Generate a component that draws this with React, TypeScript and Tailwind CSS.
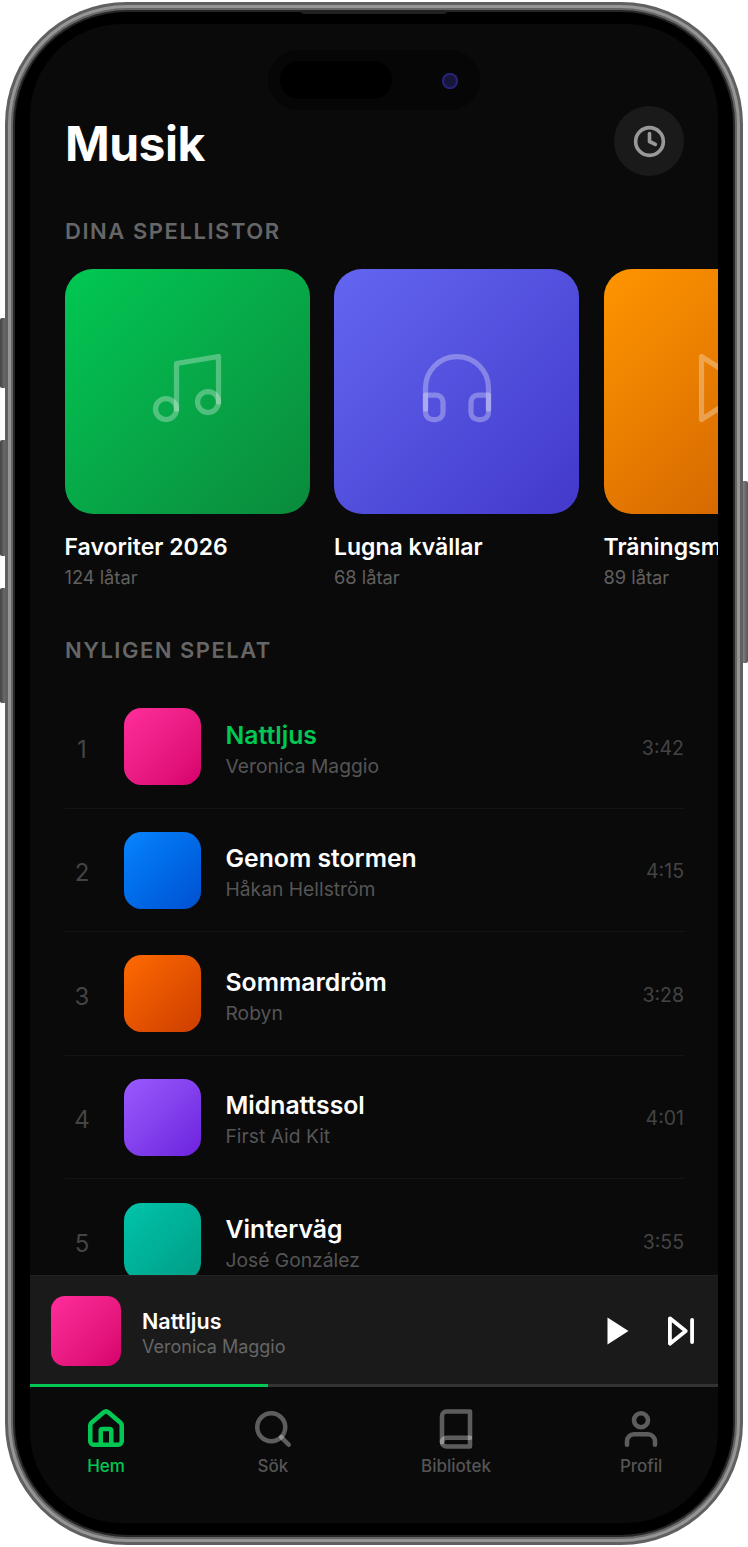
const font = { fontFamily: "Inter, 'Liberation Sans', sans-serif" };

const cards = [
  { name: "Favoriter 2026", sub: "124 låtar", bg: "bg-gradient-to-br from-[#00c853] to-[#0a8a3c]", icon: "music" },
  { name: "Lugna kvällar", sub: "68 låtar", bg: "bg-gradient-to-br from-[#6366f1] to-[#4338ca]", icon: "head" },
  { name: "Träningsmix", sub: "89 låtar", bg: "bg-gradient-to-br from-[#ff9500] to-[#c85a00]", icon: "play" },
];

const tracks = [
  { n: 1, t: "Nattljus", a: "Veronica Maggio", d: "3:42", bg: "bg-gradient-to-br from-[#ff2d9b] to-[#d6006c]", active: true },
  { n: 2, t: "Genom stormen", a: "Håkan Hellström", d: "4:15", bg: "bg-gradient-to-br from-[#0a84ff] to-[#0050d0]" },
  { n: 3, t: "Sommardröm", a: "Robyn", d: "3:28", bg: "bg-gradient-to-br from-[#ff6a00] to-[#cc3d00]" },
  { n: 4, t: "Midnattssol", a: "First Aid Kit", d: "4:01", bg: "bg-gradient-to-br from-[#9b59ff] to-[#6d20dc]" },
  { n: 5, t: "Vinterväg", a: "José González", d: "3:55", bg: "bg-gradient-to-br from-[#00c4aa] to-[#009c86]" },
];

function CardIcon({ kind }: { kind: string }) {
  const s = "rgba(255,255,255,0.3)";
  return (
    <svg width="84" height="84" viewBox="0 0 24 24" fill="none" stroke={s} strokeWidth="1.5" strokeLinecap="round" strokeLinejoin="round" className="mb-[7px] shrink-0">
      {kind === "music" && (
        <>
          <path d="M9 18V5l12-2v13" />
          <circle cx="6" cy="18" r="3" />
          <circle cx="18" cy="16" r="3" />
        </>
      )}
      {kind === "head" && (
        <>
          <path d="M3 18v-6a9 9 0 0 1 18 0v6" />
          <path d="M21 19a2 2 0 0 1-2 2h-1a2 2 0 0 1-2-2v-3a2 2 0 0 1 2-2h3z" />
          <path d="M3 19a2 2 0 0 0 2 2h1a2 2 0 0 0 2-2v-3a2 2 0 0 0-2-2H3z" />
        </>
      )}
      {kind === "play" && <polygon points="5 3 19 12 5 21 5 3" />}
    </svg>
  );
}

function TabIcon({ kind, color }: { kind: string; color: string }) {
  return (
    <svg width="42" height="42" viewBox="0 0 24 24" fill="none" stroke={color} strokeWidth="2.6" strokeLinecap="round" strokeLinejoin="round">
      {kind === "home" && (
        <>
          <path d="M3 10a2 2 0 0 1 .709-1.528l7-6a2 2 0 0 1 2.582 0l7 6A2 2 0 0 1 21 10v9a2 2 0 0 1-2 2H5a2 2 0 0 1-2-2z" />
          <path d="M15 21v-8a1 1 0 0 0-1-1h-4a1 1 0 0 0-1 1v8" />
        </>
      )}
      {kind === "search" && (
        <>
          <circle cx="11" cy="11" r="8" />
          <path d="m21 21-4.3-4.3" />
        </>
      )}
      {kind === "book" && (
        <>
          <path d="M4 19.5A2.5 2.5 0 0 1 6.5 17H20" />
          <path d="M6.5 2H20v20H6.5A2.5 2.5 0 0 1 4 19.5v-15A2.5 2.5 0 0 1 6.5 2z" />
        </>
      )}
      {kind === "user" && (
        <>
          <path d="M20 21v-2a4 4 0 0 0-4-4H8a4 4 0 0 0-4 4v2" />
          <circle cx="12" cy="7" r="4" />
        </>
      )}
    </svg>
  );
}

function Tab({ kind, label, active, className }: { kind: string; label: string; active?: boolean; className?: string }) {
  const c = active ? "#00c853" : "rgba(255,255,255,0.34)";
  return (
    <div className={`flex flex-col items-center ${className ?? ""}`}>
      <TabIcon kind={kind} color={c} />
      <span className={`mt-[6px] text-[17px] leading-[21px] font-medium ${active ? "text-[#00c853]" : "text-[#555]"}`}>{label}</span>
    </div>
  );
}

export default function App() {
  return (
    <div className="relative h-[1547px] w-[748px] overflow-hidden bg-white" style={font}>
      {/* side buttons */}
      <div className="absolute left-0 top-[318px] h-[70px] w-[6px] rounded-l-[2px] bg-gradient-to-r from-[#444] to-[#777]" />
      <div className="absolute left-0 top-[440px] h-[116px] w-[6px] rounded-l-[2px] bg-gradient-to-r from-[#444] to-[#777]" />
      <div className="absolute left-0 top-[588px] h-[115px] w-[6px] rounded-l-[2px] bg-gradient-to-r from-[#444] to-[#777]" />
      <div className="absolute right-0 top-[481px] h-[182px] w-[6px] rounded-r-[2px] bg-gradient-to-l from-[#555] to-[#888]" />

      <div className="relative ml-[5px] mt-[2px] h-[1543px] w-[738px] rounded-[122px] bg-[#606060] p-[3px]">
        <div className="h-full rounded-[119px] bg-[#969696] p-[3px]">
          <div className="h-full rounded-[116px] bg-[#666] p-[2px]">
            <div className="h-full rounded-[114px] bg-[#262626] p-[2px]">
              <div className="h-full rounded-[112px] bg-black px-[15px] py-[12px]">
                <div className="flex h-full flex-col overflow-hidden rounded-[92px] bg-[#0a0a0a]">
                  {/* scrolling content */}
                  <div className="min-h-0 flex-1 overflow-hidden">
                    <div className="flex items-center justify-between pl-[35px] pr-[34px] pt-[82px]">
                      <h1 className="pt-[6px] text-[48px] font-bold leading-[64px] tracking-[-0.5px] text-white">Musik</h1>
                      <div className="flex h-[70px] w-[70px] items-center justify-center rounded-full bg-[#1a1a1a]">
                        <svg width="35" height="35" viewBox="0 0 24 24" fill="none" stroke="#999" strokeWidth="2.5" strokeLinecap="round" strokeLinejoin="round">
                          <circle cx="12" cy="12" r="9.5" />
                          <path d="M12 6.5V12l4 2" />
                        </svg>
                      </div>
                    </div>

                    <h2 className="ml-[35px] mt-[40px] text-[22px] font-semibold leading-[30px] tracking-[1.55px] text-[#666]">DINA SPELLISTOR</h2>

                    <div className="mt-[23px] flex gap-[24.5px] overflow-hidden pl-[34.5px]">
                      {cards.map((c) => (
                        <div key={c.name} className="w-[245px] shrink-0">
                          <div className={`flex h-[245px] w-[245px] items-center justify-center rounded-[28px] ${c.bg}`}>
                            <CardIcon kind={c.icon} />
                          </div>
                          <div className="mt-[17px] whitespace-nowrap text-[23px] font-semibold leading-[32px] text-white">{c.name}</div>
                          <div className="mt-[1px] text-[18.25px] leading-[26px] text-[#606060]">{c.sub}</div>
                        </div>
                      ))}
                    </div>

                    <h2 className="ml-[35px] mt-[45px] text-[22px] font-semibold leading-[30px] tracking-[1.5px] text-[#666]">NYLIGEN SPELAT</h2>

                    <div className="ml-[35px] mr-[33px] mt-[20.3px]">
                      {tracks.map((t) => (
                        <div key={t.n} className="flex h-[123.5px] items-center border-b border-[#141414] pr-[1px] last:border-b-0">
                          <div className="w-[34px] pt-[6px] text-center text-[24px] text-[#444]">{t.n}</div>
                          <div className={`ml-[25px] h-[77px] w-[77px] shrink-0 rounded-[17.5px] ${t.bg}`} />
                          <div className="ml-[24.5px] min-w-0 flex-1 pt-[6px]">
                            <div className={`text-[24.75px] font-semibold leading-[30px] ${t.active ? "text-[#00c853]" : "text-white"}`}>{t.t}</div>
                            <div className="mt-[3px] text-[19.25px] leading-[27px] text-[#555]">{t.a}</div>
                          </div>
                          <div className="pt-[4px] text-[19.5px] text-[#444]">{t.d}</div>
                        </div>
                      ))}
                    </div>
                  </div>

                  {/* mini player */}
                  <div className="relative h-[112px] shrink-0 border-t border-[#222] bg-[#1a1a1a]">
                    <div className="flex h-[108px] items-center pl-[21px] pr-[18px] pt-[2px]">
                      <div className="h-[70px] w-[70px] shrink-0 rounded-[14px] bg-gradient-to-br from-[#ff2d9b] to-[#d6006c]" />
                      <div className="ml-[21px] min-w-0 flex-1 pt-[4px]">
                        <div className="text-[21.5px] font-semibold leading-[27px] text-white">Nattljus</div>
                        <div className="text-[18px] leading-[24px] text-[#666]">Veronica Maggio</div>
                      </div>
                      <svg width="36" height="36" viewBox="0 0 24 24" fill="#fff">
                        <polygon points="5 3 19 12 5 21 5 3" />
                      </svg>
                      <svg width="38" height="38" viewBox="0 0 24 24" fill="none" stroke="#fff" strokeWidth="2.4" strokeLinecap="round" strokeLinejoin="round" className="ml-[26.5px]">
                        <polygon points="5 4 15 12 5 20 5 4" />
                        <line x1="19" y1="5" x2="19" y2="19" />
                      </svg>
                    </div>
                    <div className="h-[3px] bg-[#333]">
                      <div className="h-full w-[238px] bg-[#00c853]" />
                    </div>
                  </div>

                  {/* tab bar */}
                  <div className="flex h-[136px] shrink-0 items-start pl-[55px] pt-[21px]">
                    <Tab kind="home" label="Hem" active />
                    <Tab kind="search" label="Sök" className="ml-[125px]" />
                    <Tab kind="book" label="Bibliotek" className="ml-[127px]" />
                    <Tab kind="user" label="Profil" className="ml-[129px]" />
                  </div>
                </div>
              </div>
            </div>
          </div>
        </div>

        {/* top sensor strip */}
        <div className="absolute left-[296px] top-[8px] h-[4px] w-[146px] rounded-b-[3px] bg-[#222]" />
        {/* dynamic island */}
        <div className="absolute left-[263px] top-[48px] h-[60px] w-[212px] rounded-[30px] bg-[#060606]">
          <div className="absolute left-[12px] top-[11px] h-[38px] w-[112px] rounded-[19px] bg-black" />
          <div className="absolute left-[174px] top-[23px] h-[16px] w-[16px] rounded-full bg-[radial-gradient(circle,#16163a_0%,#16163a_45%,#3a2ab0_75%,#141430_100%)]" />
        </div>
      </div>
    </div>
  );
}
